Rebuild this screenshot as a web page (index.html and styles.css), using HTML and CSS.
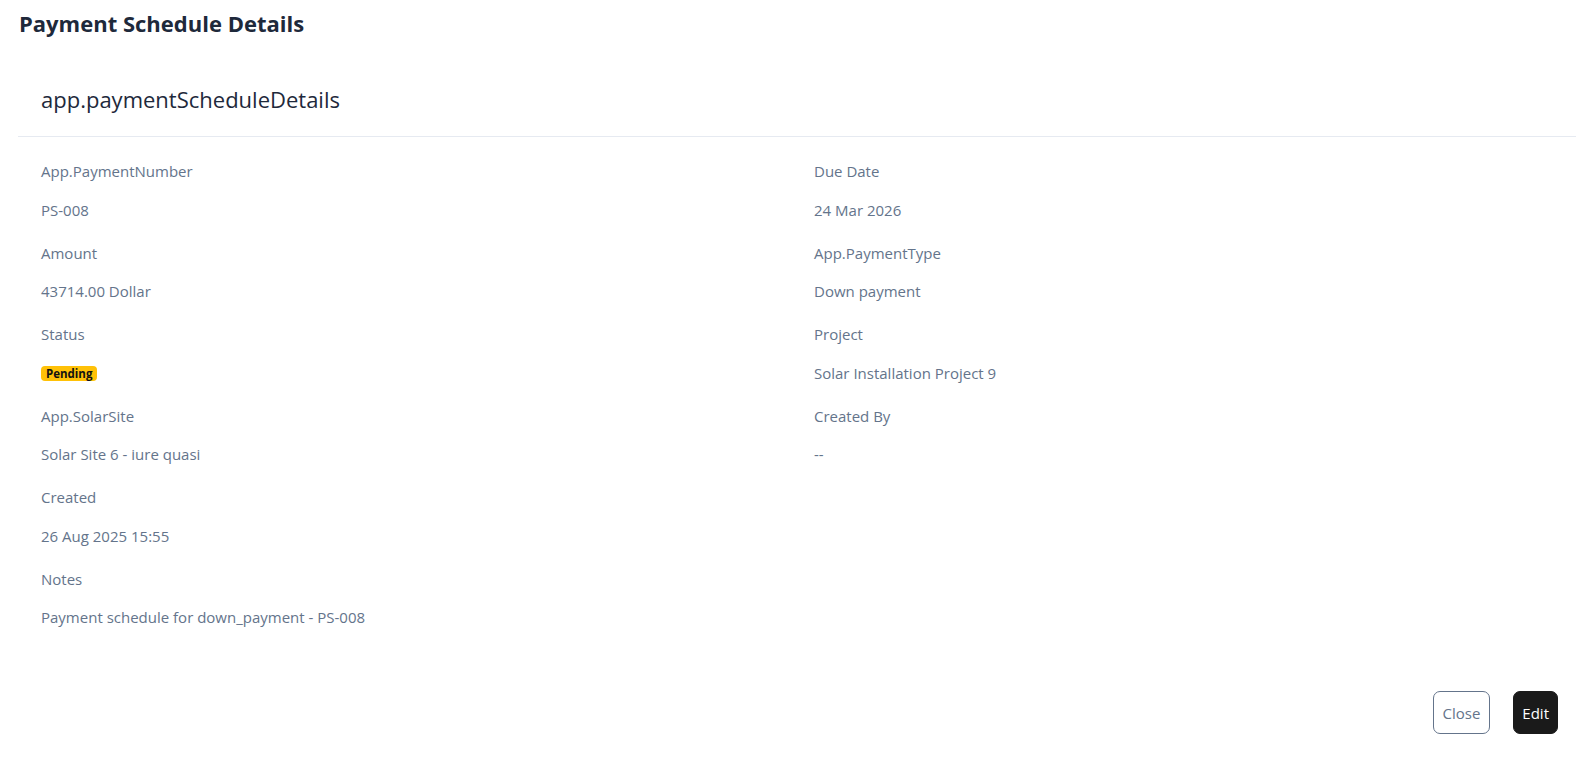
FILE: index.html
```html
<!DOCTYPE html>
<html lang="en">
<head>
<meta charset="utf-8">
<title>Payment Schedule Details</title>
<link rel="stylesheet" href="styles.css">
</head>
<body>
<div class="page">
  <h1 class="page-title">Payment Schedule Details</h1>
  <div class="card">
    <div class="card-header">
      <h2 class="card-title">app.paymentScheduleDetails</h2>
    </div>
    <div class="card-body">
      <div class="col">
        <div class="field"><div class="label">App.PaymentNumber</div><div class="value">PS-008</div></div>
        <div class="field"><div class="label">Amount</div><div class="value">43714.00 Dollar</div></div>
        <div class="field"><div class="label">Status</div><div class="value"><span class="badge">Pending</span></div></div>
        <div class="field"><div class="label">App.SolarSite</div><div class="value">Solar Site 6 - iure quasi</div></div>
        <div class="field"><div class="label">Created</div><div class="value">26 Aug 2025 15:55</div></div>
        <div class="field"><div class="label">Notes</div><div class="value">Payment schedule for down_payment - PS-008</div></div>
      </div>
      <div class="col">
        <div class="field"><div class="label">Due Date</div><div class="value">24 Mar 2026</div></div>
        <div class="field"><div class="label">App.PaymentType</div><div class="value">Down payment</div></div>
        <div class="field"><div class="label">Project</div><div class="value">Solar Installation Project 9</div></div>
        <div class="field"><div class="label">Created By</div><div class="value">--</div></div>
      </div>
    </div>
    <div class="card-footer">
      <button class="btn btn-outline">Close</button>
      <button class="btn btn-dark">Edit</button>
    </div>
  </div>
</div>
</body>
</html>
```
FILE: styles.css
```css
* { box-sizing: border-box; }
html, body { margin: 0; padding: 0; background: #ffffff; }
body {
  font-family: "Open Sans", "Noto Sans", "Liberation Sans", sans-serif;
  color: #64748b;
}
.page {
  padding: 6px 17px 0 18px;
}
.page-title {
  margin: 0;
  font-size: 22px;
  font-weight: 700;
  color: #1e293b;
  line-height: 34px;
  padding-left: 1px;
}
.card {
  margin-top: 25px;
}
.card-header {
  padding: 0 23px;
  height: 72px;
  border-bottom: 1.5px solid #e6eaf1;
  display: flex;
  align-items: center;
}
.card-title {
  margin: 0;
  font-size: 22px;
  font-weight: 400;
  color: #1e293b;
  padding-bottom: 4px;
}
.card-body {
  display: grid;
  grid-template-columns: 1fr 1fr;
  column-gap: 34px;
  padding: 23px 23px 0 23px;
}
.field {
  height: 81.5px;
  font-size: 15px;
}
.label {
  line-height: 22px;
  margin-bottom: 16.5px;
}
.value {
  line-height: 22px;
  height: 22px;
  display: flex;
  align-items: center;
}
.badge {
  display: inline-block;
  background: #ffc107;
  color: #111111;
  font-size: 11.5px;
  font-weight: 700;
  line-height: 15px;
  padding: 0 5px;
  border-radius: 4px;
  margin-top: 2px;
}
.card-footer {
  display: flex;
  justify-content: flex-end;
  gap: 23px;
  padding: 42px 18px 0 0;
}
.btn {
  height: 43px;
  font-family: inherit;
  font-size: 15px;
  border-radius: 7px;
  padding: 0 9px;
  cursor: pointer;
}
.btn-outline {
  background: #ffffff;
  color: #64748b;
  border: 1px solid #64748b;
}
.btn-dark {
  background: #1a1a1a;
  color: #ffffff;
  border: 1px solid #1a1a1a;
  padding: 0 8px;
}
```
